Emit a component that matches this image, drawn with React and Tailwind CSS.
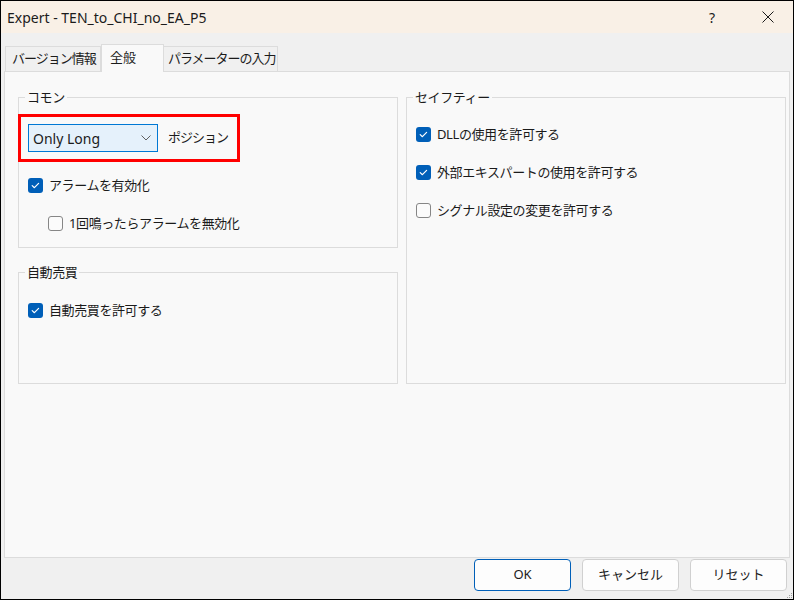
import React from 'react'

const font = "font-['Noto_Sans','Noto_Sans_CJK_JP',sans-serif]"

function Check({ checked }) {
  if (checked) {
    return (
      <span className="w-[15px] h-[15px] rounded-[3px] bg-[#005fb8] flex items-center justify-center shrink-0">
        <svg width="15" height="15" viewBox="0 0 15 15">
          <path d="M4.2 7.6 L6.4 9.7 L10.6 5.4" fill="none" stroke="#fff" strokeWidth="1.2" strokeLinecap="round" strokeLinejoin="round" />
        </svg>
      </span>
    )
  }
  return <span className="w-[15px] h-[15px] rounded-[3px] border border-[#868686] bg-[#fbfbfb] shrink-0" />
}

function CheckRow({ checked, label, className = '' }) {
  return (
    <div className={`flex items-center gap-[6px] h-[20px] ${className}`}>
      <Check checked={checked} />
      <span className="text-[13px] text-[#1b1b1b] leading-none tracking-[-0.4px]">{label}</span>
    </div>
  )
}

function Group({ title, className = '', children }) {
  return (
    <fieldset className={`border border-[#dcdcdc] px-[9px] ${className}`}>
      <legend className="-ml-[3px] px-[2px] text-[13px] leading-[18px] text-[#1b1b1b] tracking-[-0.4px]">{title}</legend>
      {children}
    </fieldset>
  )
}

function App() {
  return (
    <div className={`w-[794px] h-[600px] border border-black bg-[#f0f0f0] flex flex-col ${font}`}>
      {/* Title bar */}
      <div className="h-[32px] bg-[#f9f0e6] flex items-center pl-[6px] shrink-0">
        <span className="text-[14px] text-[#1b1b1b] flex-1">Expert - TEN_to_CHI_no_EA_P5</span>
        <span className="text-[14px] text-[#1b1b1b] mr-[47px]">?</span>
        <svg width="12" height="12" viewBox="0 0 12 12" className="mr-[19px]">
          <path d="M0.5 0.5 L11.5 11.5 M11.5 0.5 L0.5 11.5" stroke="#1b1b1b" strokeWidth="1" />
        </svg>
      </div>

      {/* Tabs */}
      <div className="flex items-end h-[27px] mt-[11px] pl-[4px] shrink-0">
        <div className="w-[96px] h-[25px] pl-[6px] flex items-center border border-b-0 border-[#dcdcdc] bg-[#f0f0f0] text-[13px] tracking-[-1px] text-[#1b1b1b]">
          バージョン情報
        </div>
        <div className="relative z-10 h-[28px] -mb-[1px] w-[63px] pl-[8px] pt-[3px] border border-b-0 border-[#dcdcdc] bg-[#f9f9f9] text-[13px] text-[#1b1b1b]">
          全般
        </div>
        <div className="w-[114px] h-[25px] pl-[4px] flex items-center border border-b-0 border-l-0 border-[#dcdcdc] bg-[#f0f0f0] text-[13px] tracking-[-1px] text-[#1b1b1b]">
          パラメーターの入力
        </div>
      </div>

      {/* Panel */}
      <div className="h-[487px] mx-[3px] border border-[#dcdcdc] bg-[#f9f9f9] pl-[13px] pt-[16px] flex gap-[8px] shrink-0">
        <div className="flex flex-col w-[380px]">
          <Group title="コモン" className="h-[160px]">
            <div className="-ml-[10px] mt-[8px] w-[222px] h-[48px] border-[3px] border-[#ff0000] flex items-center pl-[7px]">
              <div className="w-[130px] h-[28px] border border-[#0078d4] bg-[#e5f1fb] flex items-center pl-[4px] pr-[6px]">
                <span className="text-[14px] text-[#1b1b1b] flex-1">Only Long</span>
                <svg width="10" height="6" viewBox="0 0 10 6">
                  <path d="M0.5 0.5 L5 5 L9.5 0.5" fill="none" stroke="#606060" strokeWidth="1" />
                </svg>
              </div>
              <span className="ml-[10px] text-[13px] text-[#1b1b1b] tracking-[-1px]">ポジション</span>
            </div>
            <CheckRow checked label="アラームを有効化" className="mt-[13px]" />
            <CheckRow label="1回鳴ったらアラームを無効化" className="mt-[18px] ml-[20px]" />
          </Group>
          <Group title="自動売買" className="h-[121px] mt-[15px]">
            <CheckRow checked label="自動売買を許可する" className="mt-[19px]" />
          </Group>
        </div>
        <Group title="セイフティー" className="w-[380px] h-[296px]">
          <CheckRow checked label="DLLの使用を許可する" className="mt-[18px]" />
          <CheckRow checked label="外部エキスパートの使用を許可する" className="mt-[18px]" />
          <CheckRow label="シグナル設定の変更を許可する" className="mt-[18px]" />
        </Group>
      </div>

      {/* Buttons */}
      <div className="relative flex justify-end gap-[11px] pr-[6px] mt-[1px] shrink-0">
        <button className="w-[97px] h-[32px] rounded-[4px] border border-[#005fb8] bg-[#fdfdfd] text-[13px] text-[#1b1b1b]">OK</button>
        <button className="w-[97px] h-[32px] rounded-[4px] border border-[#d0d0d0] bg-[#fdfdfd] text-[13px] text-[#1b1b1b]">キャンセル</button>
        <button className="w-[97px] h-[32px] rounded-[4px] border border-[#d0d0d0] bg-[#fdfdfd] text-[13px] text-[#1b1b1b]">リセット</button>
        <svg width="6" height="6" viewBox="0 0 6 6" className="absolute right-0 -bottom-[8px]">
          <rect x="4" y="0" width="1" height="1" fill="#a0a0a0" />
          <rect x="2" y="2" width="1" height="1" fill="#a0a0a0" />
          <rect x="4" y="2" width="1" height="1" fill="#a0a0a0" />
          <rect x="0" y="4" width="1" height="1" fill="#a0a0a0" />
          <rect x="2" y="4" width="1" height="1" fill="#a0a0a0" />
          <rect x="4" y="4" width="1" height="1" fill="#a0a0a0" />
        </svg>
      </div>
    </div>
  )
}

export default App
